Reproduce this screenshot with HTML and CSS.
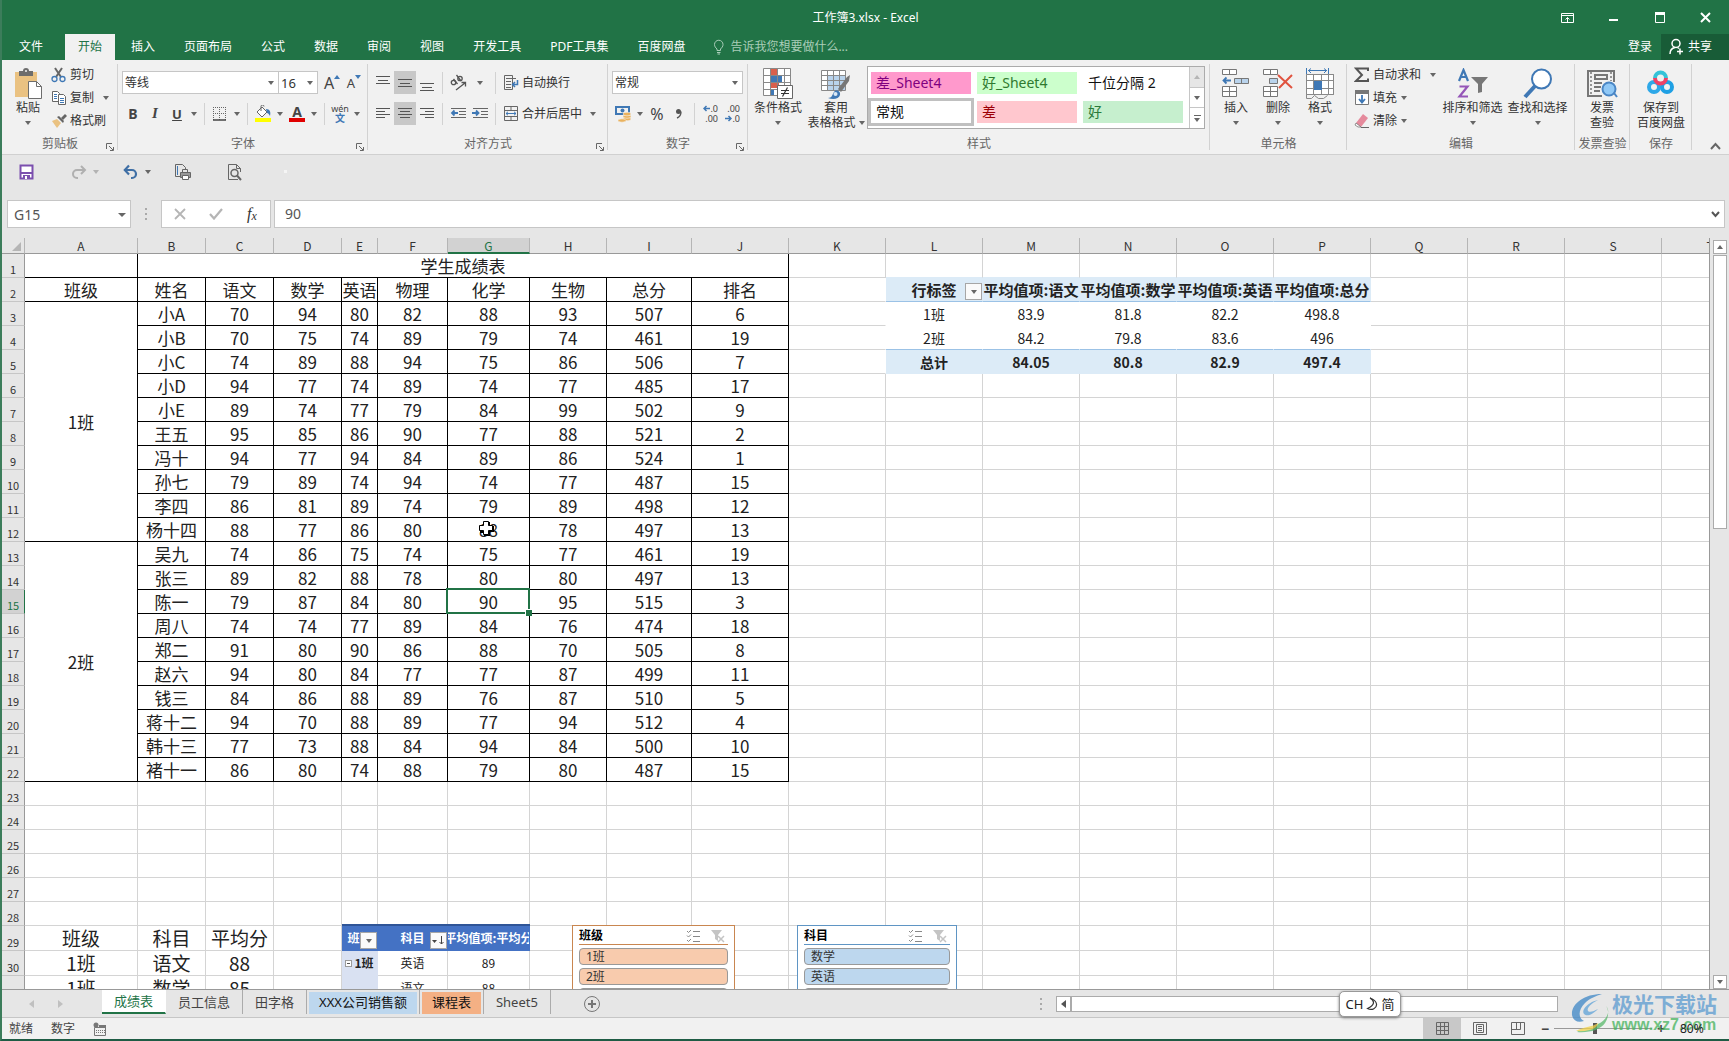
FILE: index.html
```html
<!DOCTYPE html>
<html lang="zh-CN">
<head>
<meta charset="utf-8">
<title>工作簿3.xlsx - Excel</title>
<link rel="stylesheet" href="styles.css">
</head>
<body>
<header class="titlebar">
  <h1 class="doc-title">工作簿3.xlsx - Excel</h1>
  <div class="win-controls">
    <button aria-label="功能区显示选项"><svg width="14" height="12" fill="none" stroke="#fff"><path d="M.5 1.5h12v9H.5zM.5 3.500h12M6.500 10V5.500M4.500 7.500l2-2 2 2"/></svg></button>
    <button aria-label="最小化"><svg width="10" height="12"><path d="M0 7h9v2H0z" fill="#fff"/></svg></button>
    <button aria-label="最大化"><svg width="11" height="12"><path d="M.5.5h9v10h-9z" fill="none" stroke="#fff"/><path d="M0 0h10v3H0z" fill="#fff"/></svg></button>
    <button aria-label="关闭"><svg width="12" height="12" stroke="#fff" stroke-width="2"><path d="M1 1l9 9M10 1l-9 9"/></svg></button>
  </div>
</header>
<nav class="tabs">
  <button class="tab file">文件</button>
  <button class="tab active">开始</button>
  <button class="tab">插入</button>
  <button class="tab">页面布局</button>
  <button class="tab">公式</button>
  <button class="tab">数据</button>
  <button class="tab">审阅</button>
  <button class="tab">视图</button>
  <button class="tab">开发工具</button>
  <button class="tab">PDF工具集</button>
  <button class="tab">百度网盘</button>
  <label class="tellme"><svg width="12" height="16" fill="none" stroke="#a9cdb8"><path d="M4 11.500V10C2.500 8.500 1.500 7.500 1.500 5.500a4.200 4.200 0 0 1 8.500 0C10 7.500 9 8.500 7.500 10v1.500zM4 13.500h3.500M4.500 15h2.500"/></svg><input type="text" placeholder="告诉我您想要做什么..."></label>
  <button class="login">登录</button>
  <button class="share"><svg width="16" height="18" fill="none" stroke="#fff" stroke-width="1.500"><circle cx="7" cy="5.500" r="4"/><path d="M1 16c0-4 2.500-6 5-6.500M8.500 9.500l1.500 1M11 10.500v6M8 13.500h6"/></svg>共享</button>
</nav>

<section class="ribbon" aria-label="功能区">
  <div class="group g-clip">
    <div class="body">
      <button class="big"><svg width="30" height="32"><path d="M2 4h22v25H2z" fill="#eac282"/><path d="M6 3h14v5H6z" fill="#6d6d6d"/><circle cx="13" cy="3" r="3" fill="#6d6d6d"/><circle cx="13" cy="3" r="1" fill="#f1f1f1"/><path d="M15.500 13.500h8l5 5v12h-13z" fill="#fff" stroke="#6d6d6d"/><path d="M23.500 13.500v5h5" fill="none" stroke="#6d6d6d"/></svg><span>粘贴</span><i class="ar"></i></button>
      <div class="stack">
        <button class="small"><svg width="16" height="16" fill="none"><path d="M4 1l6 9M11 1L5 10" stroke="#666" stroke-width="2"/><circle cx="3.500" cy="12" r="2.500" stroke="#3f78b5" stroke-width="1.300"/><circle cx="11.500" cy="12" r="2.500" stroke="#3f78b5" stroke-width="1.300"/></svg>剪切</button>
        <button class="small"><svg width="16" height="16" fill="#fff" stroke="#666"><path d="M1.500 1.500h5l2 2v8h-7z"/><path d="M7.500 4.500h5l2 2v8h-7z"/><path d="M3 4.500h3M3 6.500h3M3 8.500h3M9 8.500h4M9 10.500h4M9 12.500h4" stroke="#3f78b5"/></svg>复制<i class="ar far"></i></button>
        <button class="small"><svg width="16" height="16"><path d="M1 8l5-2 4 4-4 5z" fill="#eac282"/><path d="M6 4l2-1 5 5-1 2z" fill="#666"/><path d="M10 5l4-4 2 2-4 4z" fill="#666"/></svg>格式刷</button>
      </div>
    </div>
    <div class="label">剪贴板<svg class="launch" width="8" height="8" fill="none" stroke="#666"><path d="M.5 6V.5H6M3 3l4 4M7.500 4v3.500H4"/></svg></div>
  </div>

  <div class="group g-font">
    <div class="body rows">
      <div class="row">
        <span class="combo w-font"><select aria-label="字体"><option>等线</option></select></span>
        <span class="combo w-size"><select aria-label="字号"><option>16</option></select></span>
        <button class="ib grow-a" aria-label="增大字号"><span class="a-big">A</span><svg width="6" height="4"><path d="M0 4l3-4 3 4z" fill="#3f78b5"/></svg></button>
        <button class="ib grow-a" aria-label="减小字号"><span class="a-small">A</span><svg width="6" height="4"><path d="M0 0l3 4 3-4z" fill="#3f78b5"/></svg></button>
      </div>
      <div class="row">
        <button class="ib bold">B</button><button class="ib ital">I</button><button class="ib under">U</button><button class="dd" aria-label="下划线选项"><i class="ar"></i></button>
        <span class="sep"></span>
        <button class="ib" aria-label="边框"><svg width="14" height="14" fill="none" stroke="#666"><path d="M.5 0v13M6.500 0v13M12.500 0v13M0 .5h13M0 6.500h13" stroke-dasharray="1 1"/><path d="M0 13h13" stroke="#444" stroke-width="1.500"/></svg></button><button class="dd" aria-label="边框选项"><i class="ar"></i></button>
        <span class="sep"></span>
        <button class="ib" aria-label="填充颜色"><svg width="17" height="17"><path d="M2 7l5-5 5 5-5 5z" fill="#fff" stroke="#666"/><path d="M6 6V1.500a1.500 1.500 0 0 1 3 0" fill="none" stroke="#666"/><path d="M11 4c4 0 5 3 4 7-1-2-2-3-3-3z" fill="#3f78b5"/><path d="M0 13h16v4H0z" fill="#ffff00"/></svg></button><button class="dd" aria-label="填充颜色选项"><i class="ar"></i></button>
        <button class="ib font-color" aria-label="字体颜色"><span>A</span></button><button class="dd" aria-label="字体颜色选项"><i class="ar"></i></button>
        <span class="sep"></span>
        <button class="ib wen" aria-label="拼音"><span>wén</span><b>文</b></button><button class="dd" aria-label="拼音选项"><i class="ar"></i></button>
      </div>
    </div>
    <div class="label">字体<svg class="launch" width="8" height="8" fill="none" stroke="#666"><path d="M.5 6V.5H6M3 3l4 4M7.500 4v3.500H4"/></svg></div>
  </div>

  <div class="group g-align">
    <div class="body rows">
      <div class="row">
        <button class="ib" aria-label="顶端对齐"><svg width="14" height="18" stroke="#555"><path d="M0 2.500h14M2 6.500h10M0 9.500h14"/></svg></button>
        <button class="ib on" aria-label="垂直居中"><svg width="14" height="14" stroke="#555"><path d="M0 3.500h14M2 7.500h10M0 10.500h14"/></svg></button>
        <button class="ib" aria-label="底端对齐"><svg width="14" height="18" stroke="#555"><path d="M0 9.500h14M2 13.500h10M0 16.500h14"/></svg></button>
        <span class="sep"></span>
        <button class="ib orient" aria-label="方向"><svg width="18" height="18" fill="none" stroke="#555" stroke-width="1.300"><circle cx="4.500" cy="8.500" r="2.200"/><path d="M4.500 5l4 5M7.500 1l4.500 6"/><circle cx="11" cy="4.500" r="2.200"/><path d="M7 16l9-7M12.500 8.500h4v4"/></svg></button><button class="dd wide" aria-label="方向选项"><i class="ar"></i></button>
        <span class="sep"></span>
        <button class="txt"><svg width="16" height="16" fill="none" stroke="#666"><path d="M1.500.5h8v14h-8zM3 3.500h10M3 6.500h5M3 9.500h5M3 12.500h5"/><path d="M10 9.500h4.500V5M12 7L9.500 9.500 12 12" stroke="#3f78b5" stroke-width="1.500"/></svg>自动换行</button>
      </div>
      <div class="row">
        <button class="ib" aria-label="左对齐"><svg width="14" height="14" stroke="#555"><path d="M0 1.500h14M0 4.500h9M0 7.500h14M0 10.500h9"/></svg></button>
        <button class="ib on" aria-label="居中"><svg width="14" height="14" stroke="#555"><path d="M0 1.500h14M2 4.500h10M0 7.500h14M2 10.500h10"/></svg></button>
        <button class="ib" aria-label="右对齐"><svg width="14" height="14" stroke="#555"><path d="M0 1.500h14M5 4.500h9M0 7.500h14M5 10.500h9"/></svg></button>
        <span class="sep"></span>
        <button class="ib" aria-label="减少缩进"><svg width="17" height="14" fill="none" stroke="#666"><path d="M1 1.500h15M9 4.500h7M9 7.500h7M1 10.500h15"/><path d="M8 6H2M4.500 3.500L2 6l2.500 2.500" stroke="#3f78b5" stroke-width="1.800"/></svg></button>
        <button class="ib" aria-label="增加缩进"><svg width="17" height="14" fill="none" stroke="#666"><path d="M1 1.500h15M9 4.500h7M9 7.500h7M1 10.500h15"/><path d="M0 6h6M4 3.500L6.500 6 4 8.500" stroke="#3f78b5" stroke-width="1.800"/></svg></button>
        <span class="sep"></span>
        <button class="txt"><svg width="16" height="16" fill="none" stroke="#666"><path d="M1.500.5h13v14h-13zM1.500 4.500h13M1.500 10.500h13M8 .5v4M8 10.500v4"/><path d="M3 7.500h10M5 5.800L3 7.500l2 1.700M11 5.800l2 1.700-2 1.700" stroke="#3f78b5"/></svg>合并后居中</button><button class="dd wide" aria-label="合并选项"><i class="ar"></i></button>
      </div>
    </div>
    <div class="label">对齐方式<svg class="launch" width="8" height="8" fill="none" stroke="#666"><path d="M.5 6V.5H6M3 3l4 4M7.500 4v3.500H4"/></svg></div>
  </div>

  <div class="group g-num">
    <div class="body rows">
      <div class="row"><span class="combo w-num"><select aria-label="数字格式"><option>常规</option></select></span></div>
      <div class="row">
        <button class="ib" aria-label="会计数字格式"><svg width="18" height="18"><path d="M1 1h15v9H1z" fill="#3f78b5"/><path d="M3 3h11v5H3z" fill="#f1f1f1"/><circle cx="8.500" cy="5.500" r="2" fill="#3f78b5"/><g fill="#eab25e" stroke="#f1f1f1" stroke-width=".6"><ellipse cx="13" cy="14" rx="4" ry="1.800"/><ellipse cx="13" cy="11.500" rx="4" ry="1.800"/><ellipse cx="8" cy="15.500" rx="4" ry="1.700"/><ellipse cx="13" cy="9" rx="4" ry="1.800"/></g></svg></button><button class="dd" aria-label="会计格式选项"><i class="ar"></i></button>
        <button class="ib pct">%</button><button class="ib comma" aria-label="千位分隔样式"><svg width="8" height="12"><circle cx="3.500" cy="3.500" r="2.500" fill="#555"/><path d="M6 3.500C6 7 4.500 9 2 10" fill="none" stroke="#555" stroke-width="1.400"/></svg></button>
        <span class="sep"></span>
        <button class="ib dec" aria-label="增加小数位数"><span><svg width="7" height="7" fill="none" stroke="#3f78b5" stroke-width="1.500"><path d="M7 3.500H1M3.500 1L1 3.500 3.500 6"/></svg>.0</span><span>.00</span></button>
        <button class="ib dec" aria-label="减少小数位数"><span>.00</span><span><svg width="7" height="7" fill="none" stroke="#3f78b5" stroke-width="1.500"><path d="M0 3.500h6M3.500 1L6 3.500 3.500 6"/></svg>.0</span></button>
      </div>
    </div>
    <div class="label">数字<svg class="launch" width="8" height="8" fill="none" stroke="#666"><path d="M.5 6V.5H6M3 3l4 4M7.500 4v3.500H4"/></svg></div>
  </div>

  <div class="group g-style">
    <div class="body">
      <button class="big w54"><svg width="32" height="32"><path d="M1.500.5h27v27h-27z" fill="#fff"/><path d="M8 1h7v6H8z" fill="#d9604c"/><path d="M8 8h12v6H8z" fill="#3f78b5"/><path d="M8 14h9v6H8z" fill="#d9604c"/><path d="M8 21h4v6H8z" fill="#3f78b5"/><path d="M1.500.5h27v27h-27zM1.500 7.500h27M1.500 14.500h27M1.500 21.500h27M8.500.5v27M15.500.5v27M22.500.5v27" fill="none" stroke="#888"/><path d="M15.500 17.500h15v13h-15z" fill="#fff" stroke="#666"/><path d="M19 22.500h8M19 25.500h8M25.500 19.500l-5 9" stroke="#333" stroke-width="1.200"/></svg><span>条件格式</span><i class="ar"></i></button>
      <button class="big w62"><svg width="32" height="32"><path d="M1.500 2.500h24v20h-24z" fill="#fff"/><path d="M8 8h18v14H8z" fill="#b9d3ec"/><path d="M1.500 2.500h24v20h-24zM1.500 7.500h24M1.500 12.500h24M1.500 17.500h24M7.500 2.500v20M13.500 2.500v20M19.500 2.500v20" fill="none" stroke="#888"/><path d="M30 7l-1 6-8 11-3-3 9-12z" fill="#777"/><path d="M8 30c4 0 4-3 6-6s7-1 6 3-7 5-12 3z" fill="#3f78b5"/><circle cx="15.500" cy="26" r="2" fill="#dbe8f5"/></svg><span>套用</span><span>表格格式 <i class="ar"></i></span></button>
      <div class="gallery">
        <div class="cells">
          <button class="st bad4">差_Sheet4</button><button class="st good4">好_Sheet4</button><button class="st">千位分隔 2</button>
          <button class="st norm">常规</button><button class="st bad">差</button><button class="st good">好</button>
        </div>
        <div class="gal-nav"><button class="off" aria-label="上一行"><i class="ar up"></i></button><button aria-label="下一行"><i class="ar"></i></button><button class="more" aria-label="其他"><i class="ar"></i></button></div>
      </div>
    </div>
    <div class="label">样式</div>
  </div>

  <div class="group g-cells">
    <div class="body">
      <button class="big"><svg width="30" height="32" fill="#fff" stroke="#777"><path d="M1.500 1.500h14v5h-14zM8.500 1.500v5M1.500 18.500h14v10h-14zM8.500 18.500v10M1.500 23.500h14"/><path d="M13.500 10.500h14v5h-14zM20.500 10.500v5" fill="#b9d3ec"/><path d="M10 12.500H2.500M5.500 9.500l-3 3 3 3" fill="none" stroke="#3f78b5" stroke-width="1.800"/></svg><span>插入</span><i class="ar"></i></button>
      <button class="big"><svg width="32" height="32" fill="#fff" stroke="#777"><path d="M1.500 1.500h14v5h-14zM8.500 1.500v5M1.500 18.500h14v10h-14zM8.500 18.500v10M1.500 23.500h14"/><path d="M7.500 10.500h8v5h-8z" fill="#b9d3ec"/><path d="M16 7l14 13M30 7L17 20" fill="none" stroke="#e0533f" stroke-width="2"/></svg><span>删除</span><i class="ar"></i></button>
      <button class="big"><svg width="30" height="34" fill="none" stroke="#888"><path d="M1.500 6.500h27v20h-27z" fill="#fff"/><path d="M1.500 6.500h27v20h-27zM8.500 6.500v20M16.500 6.500v20M23.500 6.500v20M1.500 12.500h27M1.500 20.500h27M1.500 26.500v4h5l3-3 4 3h5l4-3"/><path d="M9 13h8v9H9z" fill="#3f78b5" stroke="none"/><path d="M1.500 0v6M23.500 0v6M3 2.500h19M6 .5L3.500 2.500 6 5M19 .5l2.500 2L19 5" stroke="#3f78b5"/></svg><span>格式</span><i class="ar"></i></button>
    </div>
    <div class="label">单元格</div>
  </div>

  <div class="group g-edit">
    <div class="body">
      <div class="stack">
        <button class="small"><svg width="16" height="16" fill="none" stroke="#555" stroke-width="2"><path d="M14 4V1.500H2L8 8l-6 6h12V11.500"/></svg>自动求和<i class="ar far"></i></button>
        <button class="small"><svg width="16" height="16"><path d="M1.500.5h13v14h-13z" fill="#fff" stroke="#777"/><path d="M1 0h14v4H1z" fill="#777"/><path d="M8 5v7M5 9l3 3.500L11 9" stroke="#3f78b5" fill="none" stroke-width="1.800"/></svg>填充<i class="ar"></i></button>
        <button class="small"><svg width="16" height="16"><path d="M2 10l7-9 5 4-7 9H4z" fill="#e58a9c"/><path d="M2 10l5 4H4l-3-2z" fill="#fff" stroke="#777" stroke-width=".8"/><path d="M7 14.500h8" stroke="#666"/></svg>清除<i class="ar"></i></button>
      </div>
      <button class="big w65"><svg width="32" height="32" fill="none"><path d="M2 13L6.500 2 11 13M3.500 9h6" stroke="#3f78b5" stroke-width="2.200"/><path d="M2.500 18.500h8l-8 10h8.500" stroke="#9556b8" stroke-width="2.200"/><path d="M14 9h17l-6 7v8l-4 1v-9z" fill="#777"/></svg><span>排序和筛选</span><i class="ar"></i></button>
      <button class="big w65"><svg width="30" height="32"><circle cx="18.500" cy="11" r="9.500" fill="#fff" stroke="#3f78b5" stroke-width="2"/><path d="M12 18L2 29" stroke="#3f78b5" stroke-width="4"/></svg><span>查找和选择</span><i class="ar"></i></button>
    </div>
    <div class="label">编辑</div>
  </div>

  <div class="group g-inv">
    <div class="body">
      <button class="big w54"><svg width="32" height="32" fill="none" stroke="#777" stroke-width="2"><path d="M28 14V3H2v25h14"/><path d="M5 4v23M25 4v9" stroke-dasharray="2 2" stroke-width="1.500"/><path d="M9 7h12v4H9zM8 15h8M8 19h7M8 23h6"/><circle cx="23" cy="21" r="6.500" fill="#90c8f6" stroke="#4a86c5"/><path d="M28 25l3 4" stroke="#4a86c5"/></svg><span>发票</span><span>查验</span></button>
    </div>
    <div class="label">发票查验</div>
  </div>

  <div class="group g-save">
    <div class="body">
      <button class="big w62"><svg width="30" height="32" fill="none" stroke-width="4"><circle cx="8" cy="19" r="5" stroke="#2ea8e8"/><circle cx="21" cy="19" r="5" stroke="#1fa0e4"/><path d="M9 10a5.500 5.500 0 0 1 11 0" stroke="#35c3d8"/><path d="M9 10a5.500 5.500 0 1 0 11 0" stroke="#ee4266"/></svg><span>保存到</span><span>百度网盘</span></button>
    </div>
    <div class="label">保存</div>
  </div>
  <button class="collapse" aria-label="折叠功能区"><svg width="11" height="8" fill="none" stroke="#666" stroke-width="2"><path d="M1 7l4.500-5L10 7"/></svg></button>
</section>

<div class="qat">
  <div><button class="ib" aria-label="保存"><svg width="16" height="16"><path d="M1.500 1.500h12v13h-12z" fill="#fff" stroke="#7b4fae" stroke-width="2"/><path d="M1 8h13v2H1zM4 11h7v4H4z" fill="#7b4fae"/><path d="M6 12h2v3H6z" fill="#fff"/></svg></button></div>
  <div><button class="ib" aria-label="恢复"><svg width="16" height="16" fill="none" stroke="#b0b0b0" stroke-width="2"><path d="M14 6H6a4 4 0 0 0 0 8h1M10 2l4 4-4 4"/></svg></button><button class="dd faint" aria-label="恢复列表"><i class="ar"></i></button></div>
  <div><button class="ib" aria-label="撤消"><svg width="16" height="16" fill="none" stroke="#3f6fa5" stroke-width="2.200"><path d="M2 6h7a4 4 0 0 1 0 8H8M6 1.500L1.800 6 6 10.500"/></svg></button><button class="dd" aria-label="撤消列表"><i class="ar"></i></button></div>
  <div><button class="ib" aria-label="快速打印"><svg width="18" height="18" fill="none" stroke="#666"><path d="M6 13.500H1.500V1.500h7l3 3V6"/><path d="M3.500 3v9" stroke="#3f78b5"/><path d="M8.500 10V6.500h5V10"/><path d="M6.500 9.500h10v5h-10z" fill="#999"/><path d="M8.500 12.500h6v4h-6z" fill="#fff"/></svg></button></div>
  <div><button class="ib" aria-label="打印预览"><svg width="18" height="18" fill="none" stroke="#666"><path d="M12 16.500H2.500v-15h8l4 4V9M10.500 1.500v4h4"/><circle cx="8.500" cy="10" r="3.500" stroke-width="1.500"/><path d="M11 12.500l4 4.500" stroke-width="2"/></svg></button></div>
  <div class="qat-more"><i></i></div>
</div>

<div class="formula">
  <span class="combo name"><input aria-label="名称框" value="G15"></span>
  <span class="dots"><i></i><i></i><i></i></span>
  <div class="fx-btns">
    <button aria-label="取消"><svg width="12" height="12" stroke="#b5b5b5" stroke-width="1.800"><path d="M1 1l10 10M11 1L1 11"/></svg></button>
    <button aria-label="输入"><svg width="14" height="12" fill="none" stroke="#b5b5b5" stroke-width="2.200"><path d="M1 6l4 4.500L13 1"/></svg></button>
    <button class="fx" aria-label="插入函数"><em>f</em><em class="x">x</em></button>
  </div>
  <div class="fx-input"><input aria-label="编辑栏" value="90"><svg width="9" height="7" fill="none" stroke="#555" stroke-width="2"><path d="M1 1l3.500 4L8 1"/></svg></div>
</div>

<main class="sheet">
  <div class="grid" id="grid">
    <table class="cells-table" id="cells"></table>

    <section class="slicer orange" aria-label="班级切片器">
      <h2>班级<svg width="42" height="14" fill="none" stroke="#888"><path d="M1 2l1.500 1.500L5 1M1 6.500L2.500 8 5 5.500M1 11l1.500 1.500L5 10M7 2.500h7M7 7.500h7M7 12.500h7"/><path d="M25 1h11l-4 5v6l-3-2V6z" fill="#c4c4c4" stroke="none"/><path d="M32 7l6 6M38 7l-6 6" stroke="#c4c4c4" stroke-width="1.500"/></svg></h2>
      <button>1班</button><button>2班</button><button aria-label="空白"></button>
    </section>
    <section class="slicer blue" aria-label="科目切片器">
      <h2>科目<svg width="42" height="14" fill="none" stroke="#888"><path d="M1 2l1.500 1.500L5 1M1 6.500L2.500 8 5 5.500M1 11l1.500 1.500L5 10M7 2.500h7M7 7.500h7M7 12.500h7"/><path d="M25 1h11l-4 5v6l-3-2V6z" fill="#c4c4c4" stroke="none"/><path d="M32 7l6 6M38 7l-6 6" stroke="#c4c4c4" stroke-width="1.500"/></svg></h2>
      <button>数学</button><button>英语</button><button aria-label="空白"></button>
    </section>
    <svg class="cursor" width="18" height="18"><path d="M6 2h6v4h4v6h-4v4H6v-3H2V7h4z" fill="#000"/><path d="M5.500 1.500h5v4h4v5h-4v4h-5v-4h-4v-5h4z" fill="#fff" stroke="#000"/></svg>
  </div>
  <div class="vscroll"><button aria-label="向上滚动"><i class="ar up"></i></button><span class="thumb"></span><button class="end" aria-label="向下滚动"><i class="ar"></i></button></div>
</main>

<div class="sheetbar">
  <div class="nav-arrows"><i class="lt"></i><i class="rt"></i></div>
  <button class="stab active">成绩表</button>
  <button class="stab">员工信息</button>
  <button class="stab">田字格</button>
  <button class="stab"><span class="fill-blue">XXX公司销售额</span></button>
  <button class="stab"><span class="fill-orange">课程表</span></button>
  <button class="stab">Sheet5</button>
  <button class="add" aria-label="新工作表"><svg width="18" height="18" fill="none" stroke="#777"><circle cx="9" cy="9" r="7.500"/><path d="M5 9h8M9 5v8" stroke-width="2"/></svg></button>
  <div class="hscroll"><span class="dots"><i></i><i></i><i></i></span><button aria-label="向左滚动"><i class="lt"></i></button><span class="hthumb"></span></div>
  <div class="ime">CH <svg width="12" height="14" fill="none" stroke="#333" stroke-width="1.200"><path d="M4 1c5 3 5 7-2.500 10.500C6 14 11 11 10.500 7 10 4 7 2 4 1z"/></svg> 简</div>
</div>

<footer class="status">
  <span>就绪</span><span>数字</span>
  <svg width="14" height="14" fill="none" stroke="#777"><path d="M1.500 5.500h11v8h-11z"/><path d="M3 8.500h9M3 10.500h9" stroke-dasharray="1 1"/><circle cx="3" cy="3" r="2.500" fill="#777" stroke="none"/><path d="M6 3h7v3H6z" fill="#777" stroke="none"/></svg>
  <div class="views">
    <button class="on" aria-label="普通"><svg width="15" height="15" fill="none" stroke="#666"><path d="M1.500 1.500h12v12h-12zM5.500 1.500v12M9.500 1.500v12M1.500 5.500h12M1.500 9.500h12"/></svg></button>
    <button aria-label="页面布局"><svg width="15" height="15" fill="none" stroke="#666"><path d="M.5 1.500h13v12H.5zM3.500 3.500h7v8h-7zM5 5.500h4M5 7.500h4M5 9.500h4"/></svg></button>
    <button aria-label="分页预览"><svg width="15" height="15" fill="none" stroke="#666"><path d="M.5 1.500h13v12H.5zM5.500 1.500v7M9.500 1.500v7h-9"/></svg></button>
  </div>
  <div class="zoom"><button aria-label="缩小">−</button><input type="range" min="0" max="100" value="41" aria-label="显示比例"><button aria-label="放大">+</button><span>80%</span></div>
</footer>

<div class="watermark">
  <svg width="42" height="42"><path d="M32 2C14 2 1 12 2 23c1 6 6 8 12 6C8 26 8 18 15 11 20 6 26 4 32 2z" fill="#3d86c6"/><path d="M28 8c-9 2-17 9-14 14 4 4 11-2 14-5-4 2-8 4-10 2-2-3 4-8 10-11z" fill="#5fa3d8"/><path d="M36 14c5 5 1 14-8 18-8 4-17 5-21 8 12 1 23-2 28-9 4-6 4-13 1-17z" fill="#58b86b"/><path d="M6 39c6-4 17-4 22-8 0 4-6 9-22 8z" fill="#f0d24a"/></svg>
  <div><strong>极光下载站</strong><span>www.xz7.com</span></div>
</div>
<script src="sheet.js"></script>
</body>
</html>
```
FILE: styles.css
```css
* { box-sizing: border-box; }
html, body { margin: 0; height: 100%; }
body {
  display: flex; flex-direction: column; height: 100vh; overflow: hidden; position: relative;
  border-left: 2px solid #3c7d5b; border-bottom: 2px solid #1f5c45;
  background: #e6e6e6; color: #333;
  font: 12px/16px "Noto Sans", "Noto Sans CJK SC", sans-serif;
}
button { font: inherit; color: inherit; background: none; border: 0; padding: 0; margin: 0; }
input, select { font: inherit; color: inherit; border: 0; padding: 0; margin: 0; background: none; outline: 0; }
svg { display: block; flex: none; }

.titlebar { display: flex; align-items: center; height: 34px; padding-top: 1px; background: #217346; color: #fff; flex: none; }
.doc-title { flex: 1; margin: 0; padding-left: 184px; text-align: center; font-size: 12px; font-weight: 400; }
.win-controls { display: flex; }
.win-controls button { width: 46px; height: 32px; display: flex; align-items: center; justify-content: center; }

.tabs { display: flex; gap: 3px; height: 26px; background: #217346; color: #fff; flex: none; }
.tab { padding: 0 13px; }
.tab.file { padding: 0 17px; margin-right: 2px; }
.tab.active { background: #f1f1f1; color: #217346; }
.tellme { display: flex; align-items: center; gap: 5px; flex: 1; padding-left: 12px; }
.tellme input { width: 160px; color: #a9cdb8; }
.tellme input::placeholder { color: #a9cdb8; opacity: 1; }
.login { padding: 0 6px 0 4px; }
.share { display: flex; align-items: center; gap: 3px; width: 68px; padding-left: 8px; background: #185c37; }

.ar { display: inline-block; width: 0; height: 0; border: 3px solid transparent; border-top: 4px solid #666; border-bottom: 0; flex: none; }
.ar.up { border-top: 0; border-bottom: 4px solid #666; }
.ar.far { margin-left: 6px; }

.ribbon { display: flex; height: 95px; background: #f1f1f1; border-bottom: 1px solid #d0d0d0; flex: none; }
.group { display: flex; flex-direction: column; position: relative; flex: none; }
.group::after { content: ""; position: absolute; right: 0; top: 4px; bottom: 4px; width: 1px; background: #d2d2d2; }
.body { display: flex; height: 74px; padding: 3px 4px 0 3px; }
.body.rows { flex-direction: column; gap: 8px; padding: 11px 4px 0; }
.label { text-align: center; color: #666; height: 20px; line-height: 19px; position: relative; }
.launch { position: absolute; right: 4px; bottom: 3px; }
.g-clip { width: 116px; } .g-font { width: 250px; } .g-align { width: 240px; } .g-num { width: 140px; }
.g-style { width: 462px; } .g-cells { width: 137px; } .g-edit { width: 228px; } .g-inv { width: 55px; } .g-save { width: 62px; }
.g-inv .body, .g-save .body { padding: 3px 0 0; }
.g-cells .body { padding-left: 5px; }
.collapse { margin: auto 8px 4px auto; }

.row { display: flex; align-items: center; height: 23px; }
.ib { width: 22px; height: 23px; display: flex; align-items: center; justify-content: center; flex: none; color: #444; }
.ib.on { background: #c8c8c8; }
.dd { width: 12px; height: 23px; display: flex; align-items: center; justify-content: center; flex: none; }
.dd.wide { width: 22px; }
.dd.faint { opacity: .4; }
.sep { width: 1px; height: 22px; margin: 0 4px; background: #d2d2d2; flex: none; }
.txt { display: flex; align-items: center; gap: 3px; padding-left: 3px; white-space: nowrap; }
.combo { position: relative; display: block; height: 23px; background: #fff; border: 1px solid #c6c6c6; flex: none; }
.combo::after { content: ""; position: absolute; right: 4px; top: 9px; border: 3px solid transparent; border-top: 4px solid #666; border-bottom: 0; pointer-events: none; }
.combo select { appearance: none; width: 100%; height: 100%; padding-left: 2px; }
.w-font { width: 157px; } .w-size { width: 40px; margin-left: -1px; margin-right: 3px; } .w-num { width: 131px; }
.w-size select { font-size: 13px; }
.grow-a svg { align-self: flex-start; margin-top: 4px; }
.a-big { font-size: 16px; } .a-small { font-size: 13px; }
.bold { font-weight: 700; font-size: 14px; }
.ital { font: italic 700 15px "Liberation Serif", serif; }
.under { font-weight: 700; font-size: 13px; text-decoration: underline; }
.font-color { flex-direction: column; }
.font-color span { font-weight: 700; font-size: 14px; line-height: 13px; border-bottom: 4px solid #e00000; padding: 0 3px; }
.wen { flex-direction: column; }
.wen span { font-size: 9px; line-height: 9px; } .wen b { font-size: 10px; line-height: 11px; color: #3f78b5; }
.pct { font-size: 16px; }
.dec { flex-direction: column; align-items: flex-end; padding-right: 3px; font-size: 9px; line-height: 10px; }
.dec span { display: flex; align-items: center; }

.big { display: flex; flex-direction: column; align-items: center; width: 42px; line-height: 15px; white-space: nowrap; }
.big svg { height: 37px; padding-top: 5px; }
.big .ar { margin-top: 6px; }
.big span .ar { margin: 0 0 2px; }
.big.w54 { width: 54px; } .big.w62 { width: 62px; } .big.w65 { width: 65px; }
.g-clip .big { margin-left: 2px; }
.stack { display: flex; flex-direction: column; padding-left: 2px; }
.small { display: flex; align-items: center; gap: 3px; height: 23px; white-space: nowrap; }
.g-edit .stack { width: 90px; padding-left: 4px; }
.g-edit .small .ar:not(.far) { margin-left: 1px; }

.gallery { display: flex; flex: 1; margin: 3px 1px 5px 0; border: 1px solid #ababab; background: #fff; }
.cells { display: grid; grid-template-columns: repeat(3, 100px); gap: 6px; flex: 1; padding: 5px 3px; overflow: hidden; }
.st { text-align: left; padding-left: 5px; font-size: 14px; line-height: 20px; height: 22px; color: #111; white-space: nowrap; }
.bad4 { background: #ff99cc; color: #800080; } .good4 { background: #ccffcc; color: #2f7a2f; }
.bad { background: #ffc7ce; color: #9c0006; } .good { background: #c6efce; color: #2a7a3a; }
.norm { outline: 3px solid #c0c0c0; }
.gal-nav { display: flex; flex-direction: column; width: 15px; border-left: 1px solid #c6c6c6; }
.gal-nav button { flex: 1; border-bottom: 1px solid #c6c6c6; display: flex; align-items: center; justify-content: center; }
.gal-nav button:last-child { border-bottom: 0; }
.gal-nav .off { background: #e6e6e6; }
.gal-nav .off .ar { border-bottom-color: #b5b5b5; }
.gal-nav .more { flex-direction: column; gap: 2px; }
.gal-nav .more::before { content: ""; width: 7px; height: 1px; background: #666; }

.qat { display: grid; grid-template-columns: repeat(6, 52px); align-items: center; height: 35px; padding: 0 0 2px 14px; flex: none; }
.qat > div { display: flex; }
.qat-more i { width: 3px; height: 3px; margin-left: 8px; background: #f5f5f5; }

.formula { display: flex; align-items: stretch; height: 48px; padding: 10px 4px 10px 5px; flex: none; }
.formula .combo { width: 124px; height: 28px; }
.formula .combo::after { top: 12px; border-width: 4px; border-bottom: 0; }
.name input { width: 100px; height: 100%; padding-left: 6px; font-size: 14px; color: #555; }
.dots { display: flex; flex-direction: column; justify-content: center; gap: 3px; align-items: center; width: 30px; }
.dots i { width: 2px; height: 2px; background: #aaa; }
.fx-btns { display: flex; width: 110px; background: #fff; border: 1px solid #c6c6c6; margin-right: 3px; }
.fx-btns button { flex: 1; display: flex; align-items: center; justify-content: center; }
.fx-btns .fx { font: 16px "Liberation Serif", serif; } .fx .x { font-size: 12px; padding-top: 4px; }
.fx-input { flex: 1; display: flex; align-items: center; background: #fff; border: 1px solid #c6c6c6; padding-right: 4px; }
.fx-input input { flex: 1; padding-left: 10px; font-size: 14px; color: #555; }

.sheet { display: flex; flex: 1; min-height: 0; border-bottom: 1px solid #999; }
.grid { flex: 1; position: relative; overflow: hidden; border-right: 1px solid #999; background: linear-gradient(#e6e6e6 16px, #fff 0); }
.cells-table { table-layout: fixed; border-collapse: separate; border-spacing: 0; width: 0; font: 17px/20px "Noto Sans CJK SC", sans-serif; color: #222; }
.cells-table th { font-weight: 400; padding: 0; background: #e6e6e6; color: #333; }
.cells-table thead th { height: 16px; font-size: 12px; line-height: 14px; border-right: 1px solid #b5b5b5; border-bottom: 1px solid #999; }
.cells-table thead .cur { background: #d2d2d2; color: #217346; border-bottom: 2px solid #217346; line-height: 13px; }
.corner i { display: block; margin: 1px 3px 0 auto; width: 0; height: 0; border-left: 9px solid transparent; border-bottom: 9px solid #b5b5b5; }
.cells-table tbody th { font-size: 11px; line-height: 12px; vertical-align: bottom; padding-bottom: 2px; border-right: 1px solid #999; border-bottom: 1px solid #c6c6c6; }
.cells-table tbody .cur { background: #d2d2d2; color: #217346; border-right-color: #217346; }
.cells-table tr { height: 24px; }
.cells-table thead tr { height: 16px; }
.cells-table tr.tall { height: 25px; }
.cells-table td { padding: 0; text-align: center; white-space: nowrap; border-right: 1px solid #d4d4d4; border-bottom: 1px solid #d4d4d4; position: relative; }
.cells-table td.k { border-right-color: #000; border-bottom-color: #000; }
.cells-table td.nr { border-right-color: #fff; }
.cells-table td.bb { border-bottom-color: #dcebf7; }
.cells-table td.pv { font-size: 14px; border-color: #fff; }
.cells-table td.pl { border-bottom-color: #9bc2e6; }
.cells-table td.ph { font-size: 15px; font-weight: 700; background: #dcebf7; border-right-color: #dcebf7; border-bottom-color: #9bc2e6; }
.cells-table td.pt { font-size: 14px; font-weight: 700; background: #dcebf7; border-color: #dcebf7; }
.cells-table td.lg { font-size: 19px; line-height: 22px; }
.cells-table td.sm { font-size: 12px; line-height: 16px; }
.cells-table td.bh { font-size: 12px; line-height: 16px; font-weight: 700; color: #fff; background: #4472c4; border-color: #4472c4; box-shadow: 0 -2px #2f5597; }
.cells-table td.bg { font-size: 12px; line-height: 16px; font-weight: 700; background: #d9e1f2; border-color: #d9e1f2; }
.over { display: flex; justify-content: center; overflow: hidden; }
.sel::after { content: ""; position: absolute; inset: -2px -1px -1px -2px; border: 2px solid #217346; z-index: 1; }
.sel::before { content: ""; position: absolute; right: -3px; bottom: -3px; width: 6px; height: 6px; background: #217346; border: 1px solid #fff; border-right: 0; border-bottom: 0; z-index: 2; }
.flt { position: absolute; right: 0; bottom: 1px; width: 17px; height: 17px; border: 1px solid #a6a6a6; background: #fafafa; display: flex; align-items: center; justify-content: center; }
.tog { display: inline-block; width: 7px; height: 7px; border: 1px solid #9a9a9a; vertical-align: 1px; margin-right: 2px; background: linear-gradient(#555, #555) 1px 2px / 3px 1px no-repeat #fff; }

.slicer { position: absolute; top: 687px; height: 110px; background: #fff; border: 1px solid; padding: 1px 6px; display: flex; flex-direction: column; gap: 3px; }
.slicer h2 { display: flex; justify-content: space-between; align-items: center; margin: 0; height: 18px; font-size: 12px; font-weight: 700; color: #000; border-bottom: 1px solid; }
.slicer button { height: 17px; flex: none; text-align: left; padding-left: 6px; border: 1px solid #999; border-radius: 4px; line-height: 15px; }
.orange { left: 570px; width: 163px; border-color: #c98650; } .orange h2 { border-color: #c98650; } .orange button { background: #f8cbad; }
.blue { left: 795px; width: 160px; border-color: #5f95c4; } .blue h2 { border-color: #5f95c4; } .blue button { background: #bdd7ee; }
.cursor { position: absolute; left: 476px; top: 282px; }

.vscroll { width: 19px; display: flex; flex-direction: column; padding: 2px 2px 0 3px; gap: 1px; }
.vscroll button { height: 14px; border: 1px solid #ababab; background: #fff; display: flex; align-items: center; justify-content: center; }
.thumb { height: 274px; background: #fff; border: 1px solid #ababab; }
.vscroll .end { margin-top: auto; }

.sheetbar { display: flex; height: 28px; border-bottom: 1px solid #c6c6c6; font-size: 13px; color: #444; position: relative; flex: none; }
.nav-arrows { width: 100px; display: flex; gap: 24px; align-items: center; padding-left: 27px; }
.lt, .rt { width: 0; height: 0; border: 4px solid transparent; border-right: 5px solid #c0c0c0; border-left: 0; }
.rt { border-right: 0; border-left: 5px solid #c0c0c0; }
.hscroll .lt { border-right-color: #555; }
.stab { height: 24px; padding: 0 12px; border-right: 1px solid #ababab; white-space: nowrap; }
.stab.active { background: #fff; color: #217346; border-bottom: 2px solid #217346; border-right-color: #fff; }
.stab span { display: block; padding: 0 10px; height: 22px; line-height: 20px; margin: 1px -10px 0; color: #111; }
.fill-blue { background: #bdd7ee; } .fill-orange { background: #f4b084; }
.add { padding-left: 32px; }
.hscroll { display: flex; align-items: center; margin-left: auto; width: 703px; flex: none; }
.hscroll button { width: 15px; height: 16px; border: 1px solid #ababab; background: #fff; display: flex; align-items: center; justify-content: center; }
.hthumb { width: 487px; height: 16px; border: 1px solid #ababab; background: #fff; }
.ime { position: absolute; right: 328px; top: 1px; width: 62px; height: 26px; border: 1px solid #999; border-radius: 5px; background: #fff; box-shadow: 0 1px 3px #777; display: flex; align-items: center; justify-content: center; gap: 3px; color: #222; }

.status { display: flex; align-items: center; gap: 18px; height: 21px; padding-left: 7px; background: #f1f1f1; color: #444; flex: none; }
.views { margin-left: auto; display: flex; }
.views button { width: 38px; height: 21px; display: flex; align-items: center; justify-content: center; }
.views .on { background: #c8c8c8; }
.zoom { display: flex; align-items: center; width: 192px; margin-left: -18px; padding-left: 2px; }
.zoom button { width: 12px; font-weight: 700; font-size: 14px; }
.zoom input { appearance: none; width: 98px; height: 11px; margin: 0 3px; background: linear-gradient(#999, #999) 0 5px / 100% 1px no-repeat; }
.zoom input::-webkit-slider-thumb { appearance: none; width: 4px; height: 11px; background: #555; }
.zoom span { margin-left: 13px; position: relative; z-index: 2; color: #222; }

.watermark { position: absolute; right: 12px; bottom: 5px; z-index: 1; display: flex; opacity: .75; pointer-events: none; }
.watermark div { display: flex; flex-direction: column; }
.watermark strong { font-size: 21px; line-height: 24px; color: #5a9ad0; }
.watermark span { font: 700 16px/18px "Liberation Sans", sans-serif; color: #45b35c; }
```
FILE: sheet.js
```js
// Column letters with their widths, then the cell contents row by row.
const columns = [['A', 113], ['B', 68], ['C', 68], ['D', 68], ['E', 36], ['F', 70], ['G', 82], ['H', 77], ['I', 85], ['J', 97],
  ...'KLMNOPQRST'.split('').map(c => [c, 97])];
const letters = columns.map(c => c[0]);

const scores = `小A 70 94 80 82 88 93 507 6
小B 70 75 74 89 79 74 461 19
小C 74 89 88 94 75 86 506 7
小D 94 77 74 89 74 77 485 17
小E 89 74 77 79 84 99 502 9
王五 95 85 86 90 77 88 521 2
冯十 94 77 94 84 89 86 524 1
孙七 79 89 74 94 74 77 487 15
李四 86 81 89 74 79 89 498 12
杨十四 88 77 86 80 88 78 497 13
吴九 74 86 75 74 75 77 461 19
张三 89 82 88 78 80 80 497 13
陈一 79 87 84 80 90 95 515 3
周八 74 74 77 89 84 76 474 18
郑二 91 80 90 86 88 70 505 8
赵六 94 80 84 77 77 87 499 11
钱三 84 86 88 89 76 87 510 5
蒋十二 94 70 88 89 77 94 512 4
韩十三 77 73 88 84 94 84 500 10
褚十一 86 80 74 88 79 80 487 15`.split('\n').map(r => r.split(' '));

const cells = {};
const skip = new Set();
const put = (ref, html, cls = '', attrs = '') => { cells[ref] = { html, cls, attrs }; };
const putRow = (row, from, values, cls) => values.forEach((v, i) => put(letters[letters.indexOf(from) + i] + row, v, cls));

put('A1', '', 'k');
put('B1', '学生成绩表', 'k', 'colspan="9"');
'CDEFGHIJ'.split('').forEach(c => skip.add(c + 1));
putRow(2, 'A', ['班级', '姓名', '语文', '数学', '英语', '物理', '化学', '生物', '总分', '排名'], 'k');
put('A3', '1班', 'k', 'rowspan="10"');
put('A13', '2班', 'k', 'rowspan="10"');
for (let r = 4; r < 23; r++) if (r !== 13) skip.add('A' + r);
scores.forEach((s, i) => putRow(i + 3, 'B', s, 'k'));
cells.G15.cls = 'k sel';

const filter = '<button class="flt" aria-label="筛选"><i class="ar"></i></button>';
const sorted = '<button class="flt" aria-label="筛选"><svg width="13" height="9"><path d="M0 4h5L2.500 7z" fill="#444"/><path d="M9.500 0v8M7.500 6l2 2 2-2" fill="none" stroke="#444"/></svg></button>';
putRow(1, 'L', ['', '', '', '', ''], 'bb');
for (let r = 2; r < 6; r++) put('K' + r, '', 'nr');
putRow(2, 'L', ['行标签' + filter, '平均值项:语文', '平均值项:数学', '平均值项:英语', '平均值项:总分'], 'ph');
putRow(3, 'L', ['1班', '83.9', '81.8', '82.2', '498.8'], 'pv');
putRow(4, 'L', ['2班', '84.2', '79.8', '83.6', '496'], 'pv pl');
putRow(5, 'L', ['总计', '84.05', '80.8', '82.9', '497.4'], 'pt');

putRow(29, 'A', ['班级', '科目', '平均分'], 'lg');
putRow(30, 'A', ['1班', '语文', '88'], 'lg');
putRow(31, 'A', ['1班', '数学', '85'], 'lg');
putRow(29, 'E', ['班级' + filter, '科目' + sorted, '<div class="over">平均值项:平均分</div>'], 'bh');
put('E30', '<i class="tog"></i>1班', 'bg');
put('E31', '', 'bg');
putRow(30, 'F', ['英语', '89'], 'sm');
putRow(31, 'F', ['语文', '88'], 'sm');

let html = '<colgroup><col style="width:23px">' + columns.map(c => `<col style="width:${c[1]}px">`).join('') + '</colgroup>';
html += '<thead><tr><th class="corner"><i></i></th>' +
  letters.map(l => `<th scope="col"${l === 'G' ? ' class="cur"' : ''}>${l}</th>`).join('') + '</tr></thead><tbody>';
for (let r = 1; r <= 31; r++) {
  html += `<tr${r > 28 ? ' class="tall"' : ''}><th scope="row"${r === 15 ? ' class="cur"' : ''}>${r < 31 ? r : ''}</th>`;
  for (const l of letters) {
    if (skip.has(l + r)) continue;
    const c = cells[l + r] || { html: '', cls: '', attrs: '' };
    html += `<td class="${c.cls}" ${c.attrs}>${c.html}</td>`;
  }
  html += '</tr>';
}
document.getElementById('cells').innerHTML = html + '</tbody>';
```
